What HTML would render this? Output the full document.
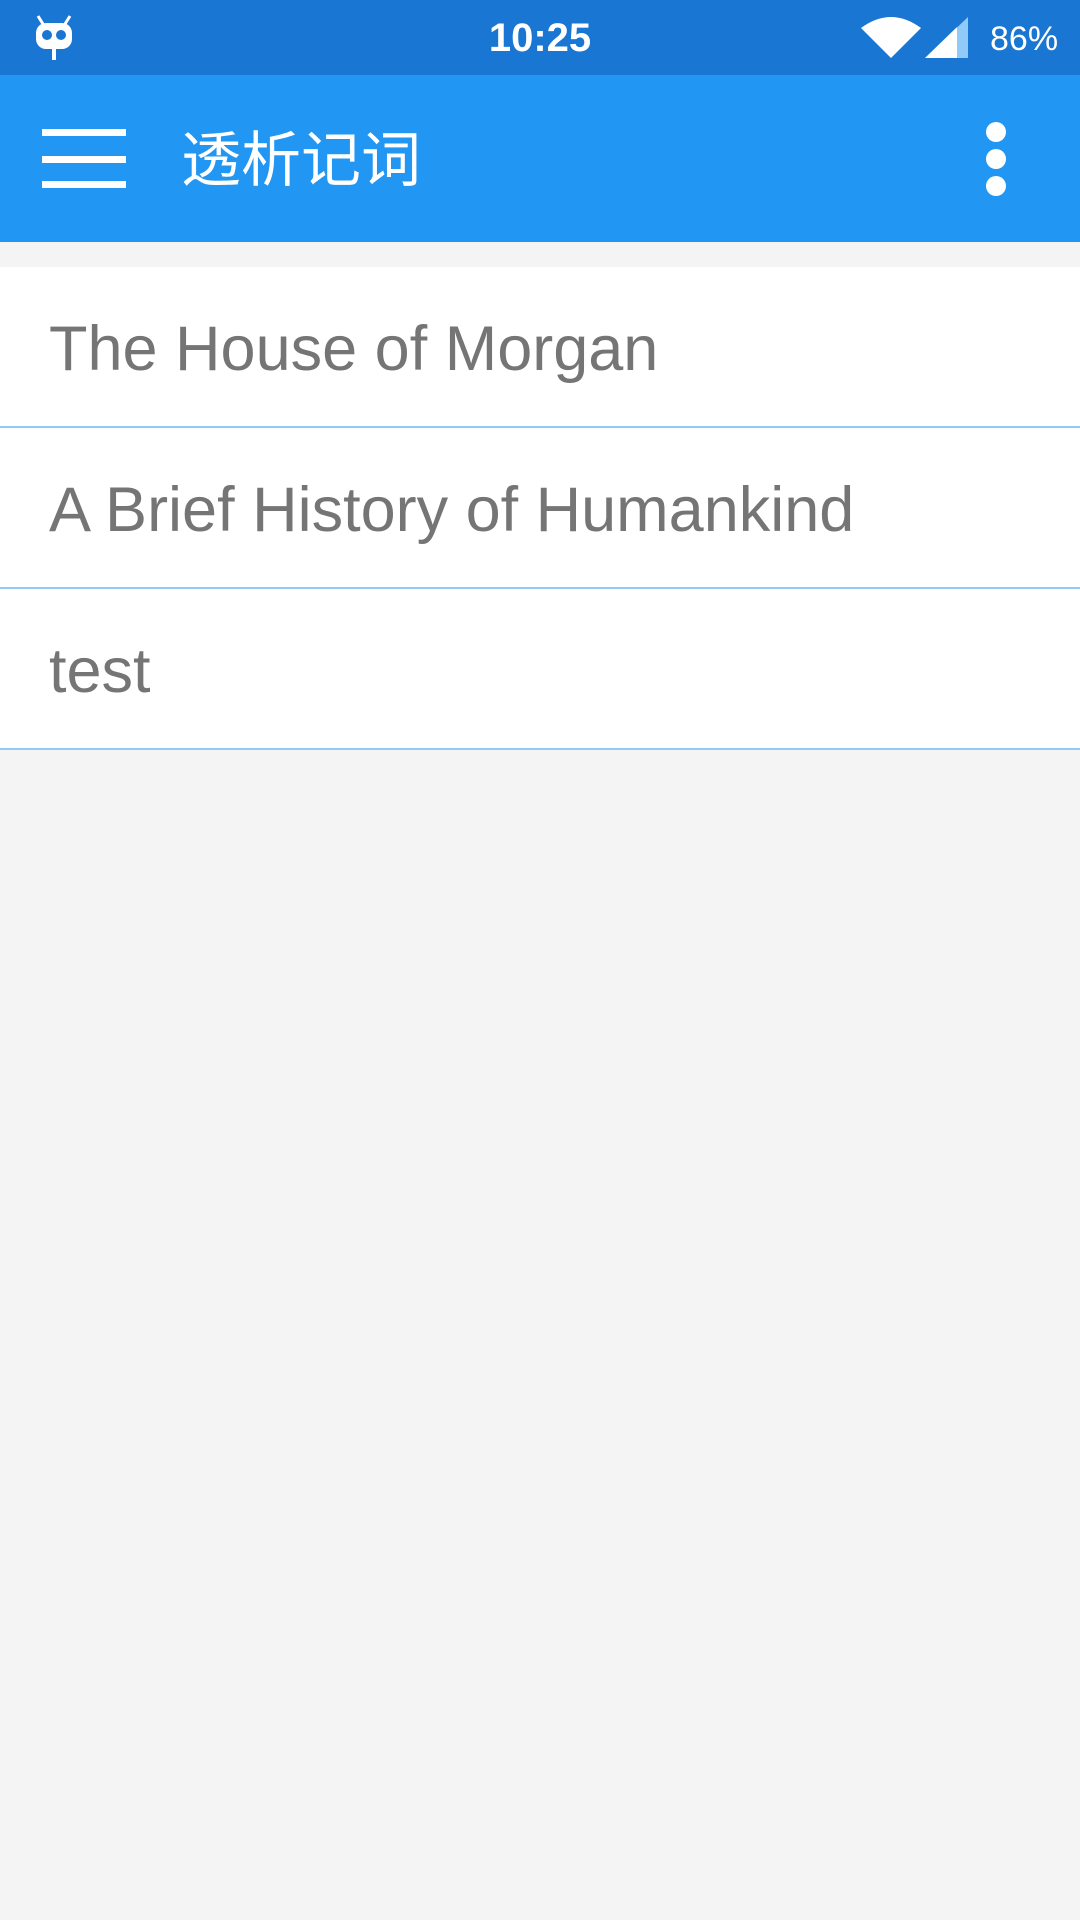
<!DOCTYPE html>
<html><head><meta charset="utf-8"><style>
*{margin:0;padding:0;box-sizing:border-box}
body{width:1080px;height:1920px;background:#f4f4f4;font-family:"Liberation Sans","Noto Sans CJK SC",sans-serif;position:relative;overflow:hidden}
.sb{position:absolute;left:0;top:0;width:1080px;height:75px;background:#1976d2}
.time{position:absolute;left:0;width:1080px;top:16px;text-align:center;color:#fff;font-size:40px;font-weight:bold}
.bat{position:absolute;left:990px;top:20px;color:#fff;font-size:34px}
.ab{position:absolute;left:0;top:75px;width:1080px;height:167px;background:#2196f3}
.ham div{position:absolute;left:42px;width:84px;height:7px;background:#fff}
.title{position:absolute;left:181px;top:42px;color:#fff;font-size:60px;font-family:"Noto Sans CJK SC",sans-serif;line-height:78px}
.dot{position:absolute;left:986px;width:20px;height:20px;border-radius:50%;background:#fff}
.row{position:absolute;left:0;width:1080px;height:161px;background:#fff;border-bottom:2px solid #90caf9}
.row span{position:absolute;left:49px;top:46px;font-size:63px;color:#757575}
</style></head><body>
<div class="sb">
<svg style="position:absolute;left:34px;top:14px" width="40" height="48" viewBox="0 0 40 48"><path d="M4 2 L9 10 M36 2 L31 10" stroke="#fff" stroke-width="3"/><rect x="2" y="9" width="36" height="26" rx="10" fill="#fff"/><circle cx="13" cy="21" r="5" fill="#1976d2"/><circle cx="27" cy="21" r="5" fill="#1976d2"/><rect x="18" y="34" width="4" height="12" fill="#fff"/></svg>
<div class="time">10:25</div>
<svg style="position:absolute;left:860px;top:16px" width="62" height="44" viewBox="0 0 62 44"><path d="M1 12 Q31 -10 61 12 L31 42 Z" fill="#fff"/></svg>
<svg style="position:absolute;left:925px;top:17px" width="43" height="41" viewBox="0 0 43 41"><path d="M0 41 L43 0 L43 41 Z" fill="#90caf9"/><path d="M0 41 L32 10 L32 41 Z" fill="#fff"/></svg>
<div class="bat">86%</div>
</div>
<div class="ab">
<div class="ham"><div style="top:54px"></div><div style="top:81px"></div><div style="top:106px"></div></div>
<div class="title">透析记词</div>
<div class="dot" style="top:47px"></div><div class="dot" style="top:74px"></div><div class="dot" style="top:101px"></div>
</div>
<div class="row" style="top:267px"><span>The House of Morgan</span></div>
<div class="row" style="top:428px"><span>A Brief History of Humankind</span></div>
<div class="row" style="top:589px"><span>test</span></div>
</body></html>
